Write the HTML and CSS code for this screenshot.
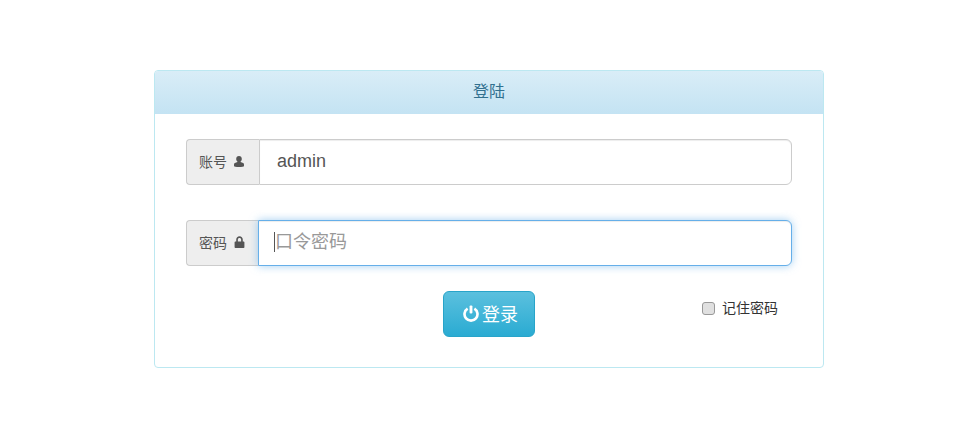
FILE: index.html
```html
<!DOCTYPE html>
<html lang="zh">
<head>
<meta charset="utf-8">
<title>登陆</title>
<link rel="stylesheet" href="styles.css">
</head>
<body>
<div class="panel">
  <div class="panel-heading">登陆</div>
  <form class="panel-body">
    <div class="input-group">
      <span class="addon addon-user">账号
        <svg class="icon" viewBox="0 0 10 11" width="10" height="11"><path d="M5 0C3.200 0 2.200 1.200 2.200 2.900c0 1.100.5 2 1.200 2.500v.6L.9 7C.3 7.300 0 7.800 0 8.400V10c0 .6 2.200 1 5 1s5-.4 5-1V8.400c0-.6-.3-1.100-.9-1.400L6.600 6v-.6c.7-.5 1.200-1.400 1.200-2.500C7.800 1.200 6.800 0 5 0z" fill="#555"/></svg>
      </span>
      <input class="field" type="text" value="admin">
    </div>
    <div class="input-group">
      <span class="addon addon-lock">密码
        <svg class="icon" viewBox="0 0 10 11" width="11" height="12"><path d="M2 5V3.300C2 1.500 3.300.3 5 .3s3 1.200 3 3V5h.8c.4 0 .7.300.7.700v4.500c0 .4-.3.700-.7.700H1.200c-.4 0-.7-.3-.7-.7V5.700c0-.4.300-.7.700-.7H2zm1.500 0h3V3.300C6.500 2.400 5.900 1.800 5 1.800s-1.500.6-1.500 1.500V5z" fill="#555"/></svg>
      </span>
      <span class="field-wrap">
        <input class="field field-focus" type="password" placeholder="口令密码">
        <span class="caret"></span>
      </span>
    </div>
    <div class="actions">
      <button class="btn" type="button">
        <svg class="power" viewBox="0 0 18 18" width="16" height="17"><path d="M5.200 3.500A7.300 7.300 0 1 0 12.800 3.500" fill="none" stroke="#fff" stroke-width="3"/><rect x="7.400" y="0" width="3.200" height="9" rx="1.200" fill="#fff"/></svg>登录
      </button>
      <label class="remember"><span class="check"></span>记住密码</label>
    </div>
  </form>
</div>
</body>
</html>
```
FILE: styles.css
```css
* { box-sizing: border-box; }
body {
  margin: 0;
  background: #fff;
  font-family: "Liberation Sans", "Noto Sans CJK SC", sans-serif;
  color: #333;
}
.panel {
  width: 670px;
  height: 298px;
  margin: 70px 0 0 154px;
  border: 1px solid #bce8f1;
  border-radius: 4px;
}
.panel-heading {
  height: 43px;
  line-height: 42px;
  text-align: center;
  font-size: 16px;
  color: #31708f;
  background: linear-gradient(to bottom, #d9edf7, #c4e3f3);
  border-radius: 3px 3px 0 0;
}
.panel-body {
  padding: 25px 31px 0;
  display: flex;
  flex-direction: column;
}
.input-group {
  display: flex;
  height: 46px;
  margin-bottom: 35px;
}
.addon {
  display: flex;
  align-items: center;
  gap: 7px;
  padding: 0 0 2px 12px;
  font-size: 14px;
  color: #555;
  background: #eee;
  border: 1px solid #ccc;
  border-right: 0;
  border-radius: 4px 0 0 4px;
}
.addon-user { width: 73px; }
.addon-lock { width: 72px; }
.icon { flex: none; }
.field {
  flex: 1;
  width: 100%;
  height: 46px;
  padding: 0 16px 2px 17px;
  font-family: inherit;
  font-size: 18px;
  color: #555;
  background: #fff;
  border: 1px solid #ccc;
  border-radius: 0 6px 6px 0;
  box-shadow: inset 0 1px 1px rgba(0,0,0,.075);
  outline: none;
}
.field-wrap {
  flex: 1;
  position: relative;
  display: flex;
}
.field-focus {
  padding-left: 16px;
  border-color: #66afe9;
  box-shadow: inset 0 1px 1px rgba(0,0,0,.075), 0 0 8px rgba(102,175,233,.6);
}
.field-focus::placeholder { color: #999; opacity: 1; }
.caret {
  position: absolute;
  left: 16px;
  top: 12px;
  width: 1px;
  height: 20px;
  background: #555;
}
.actions {
  display: flex;
  align-items: flex-start;
  margin-top: -10px;
}
.btn {
  display: flex;
  align-items: center;
  justify-content: center;
  gap: 3px;
  width: 92px;
  height: 46px;
  margin-left: 257px;
  padding: 0 0 2px 3px;
  font-family: inherit;
  font-size: 18px;
  color: #fff;
  background: linear-gradient(to bottom, #5bc0de, #2aabd2);
  border: 1px solid #28a4c9;
  border-radius: 6px;
}
.remember {
  display: flex;
  align-items: center;
  gap: 7px;
  margin: 7px 0 0 167px;
  font-size: 14px;
  line-height: 20px;
  color: #333;
}
.check {
  width: 13px;
  height: 13px;
  background: #e0e0e0;
  border: 1px solid #999;
  border-radius: 3px;
}
```
